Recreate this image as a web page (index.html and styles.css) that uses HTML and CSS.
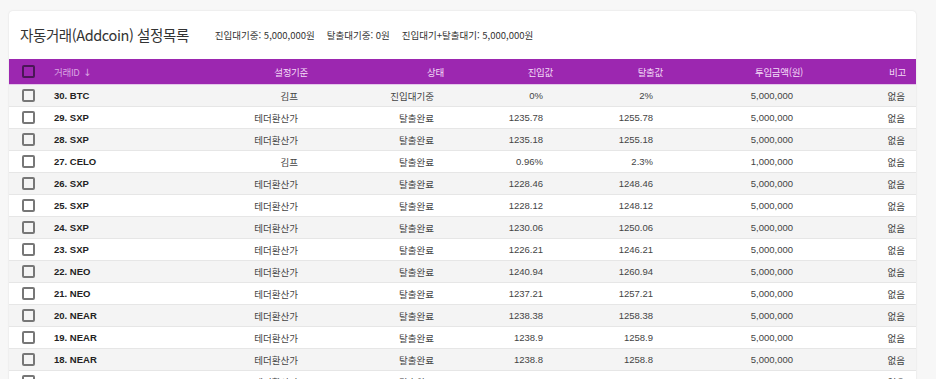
FILE: index.html
```html
<!DOCTYPE html>
<html lang="ko">
<head>
    <meta charset="utf-8">
    <title>자동거래 설정목록</title>
    <link rel="stylesheet" href="styles.css">
</head>
<body>
    <div class="card">
        <div class="toolbar">
            <h2 class="toolbar-title">자동거래(Addcoin) 설정목록</h2>
            <div class="toolbar-stats">
                <span>진입대기중: 5,000,000원</span>
                <span>탈출대기중: 0원</span>
                <span>진입대기+탈출대기: 5,000,000원</span>
            </div>
        </div>
        <table class="grid">
            <colgroup>
                <col class="c-check">
                <col class="c-id">
                <col class="c-base">
                <col class="c-state">
                <col class="c-in">
                <col class="c-out">
                <col class="c-amount">
                <col class="c-note">
            </colgroup>
            <thead>
                <tr>
                    <th class="cell-check"><span class="box box-head"></span></th>
                    <th class="cell-id sorted">거래ID <span class="arrow">&#8595;</span></th>
                    <th>설정기준</th>
                    <th>상태</th>
                    <th>진입값</th>
                    <th>탈출값</th>
                    <th>투입금액(원)</th>
                    <th class="last">비고</th>
                </tr>
            </thead>
            <tbody>
                <tr><td class="cell-check"><span class="box"></span></td><td class="cell-id">30. BTC</td><td>김프</td><td>진입대기중</td><td>0%</td><td>2%</td><td>5,000,000</td><td class="last">없음</td></tr>
                <tr><td class="cell-check"><span class="box"></span></td><td class="cell-id">29. SXP</td><td>테더환산가</td><td>탈출완료</td><td>1235.78</td><td>1255.78</td><td>5,000,000</td><td class="last">없음</td></tr>
                <tr><td class="cell-check"><span class="box"></span></td><td class="cell-id">28. SXP</td><td>테더환산가</td><td>탈출완료</td><td>1235.18</td><td>1255.18</td><td>5,000,000</td><td class="last">없음</td></tr>
                <tr><td class="cell-check"><span class="box"></span></td><td class="cell-id">27. CELO</td><td>김프</td><td>탈출완료</td><td>0.96%</td><td>2.3%</td><td>1,000,000</td><td class="last">없음</td></tr>
                <tr><td class="cell-check"><span class="box"></span></td><td class="cell-id">26. SXP</td><td>테더환산가</td><td>탈출완료</td><td>1228.46</td><td>1248.46</td><td>5,000,000</td><td class="last">없음</td></tr>
                <tr><td class="cell-check"><span class="box"></span></td><td class="cell-id">25. SXP</td><td>테더환산가</td><td>탈출완료</td><td>1228.12</td><td>1248.12</td><td>5,000,000</td><td class="last">없음</td></tr>
                <tr><td class="cell-check"><span class="box"></span></td><td class="cell-id">24. SXP</td><td>테더환산가</td><td>탈출완료</td><td>1230.06</td><td>1250.06</td><td>5,000,000</td><td class="last">없음</td></tr>
                <tr><td class="cell-check"><span class="box"></span></td><td class="cell-id">23. SXP</td><td>테더환산가</td><td>탈출완료</td><td>1226.21</td><td>1246.21</td><td>5,000,000</td><td class="last">없음</td></tr>
                <tr><td class="cell-check"><span class="box"></span></td><td class="cell-id">22. NEO</td><td>테더환산가</td><td>탈출완료</td><td>1240.94</td><td>1260.94</td><td>5,000,000</td><td class="last">없음</td></tr>
                <tr><td class="cell-check"><span class="box"></span></td><td class="cell-id">21. NEO</td><td>테더환산가</td><td>탈출완료</td><td>1237.21</td><td>1257.21</td><td>5,000,000</td><td class="last">없음</td></tr>
                <tr><td class="cell-check"><span class="box"></span></td><td class="cell-id">20. NEAR</td><td>테더환산가</td><td>탈출완료</td><td>1238.38</td><td>1258.38</td><td>5,000,000</td><td class="last">없음</td></tr>
                <tr><td class="cell-check"><span class="box"></span></td><td class="cell-id">19. NEAR</td><td>테더환산가</td><td>탈출완료</td><td>1238.9</td><td>1258.9</td><td>5,000,000</td><td class="last">없음</td></tr>
                <tr><td class="cell-check"><span class="box"></span></td><td class="cell-id">18. NEAR</td><td>테더환산가</td><td>탈출완료</td><td>1238.8</td><td>1258.8</td><td>5,000,000</td><td class="last">없음</td></tr>
                <tr><td class="cell-check"><span class="box"></span></td><td class="cell-id">17. NEAR</td><td>테더환산가</td><td>탈출완료</td><td>1239.12</td><td>1259.12</td><td>5,000,000</td><td class="last">없음</td></tr>
            </tbody>
        </table>
    </div>
</body>
</html>
```

FILE: styles.css
```css
body {
    margin: 0;
    padding: 11px 20px 0 9px;
    background-color: #f7f7f7;
    font-family: "Liberation Sans", Arial, "Noto Sans CJK KR", sans-serif;
    color: #444;
    height: 379px;
    overflow: hidden;
}

/* 카드 */
.card {
    background-color: #fff;
    border-radius: 4px 4px 0 0;
    box-shadow: 0 0 2px rgba(0, 0, 0, 0.12);
}

.toolbar {
    height: 48px;
    display: flex;
    align-items: center;
    padding-left: 11px;
    padding-bottom: 1px;
    box-sizing: border-box;
}

.toolbar-title {
    margin: 0;
    font-family: "Noto Sans CJK KR", sans-serif;
    font-weight: 400;
    font-size: 14.5px;
    letter-spacing: -0.4px;
    color: #333;
}

.toolbar-stats {
    margin-left: 26px;
    display: flex;
    gap: 12px;
    font-family: "Noto Sans CJK KR", sans-serif;
    font-size: 9.5px;
    color: #333;
}

/* 테이블 */
.grid {
    width: 100%;
    border-collapse: collapse;
    table-layout: fixed;
    font-size: 9.5px;
}

.c-check { width: 35px; }
.c-id { width: 156px; }
.c-base { width: 114px; }
.c-state { width: 136px; }
.c-in { width: 109px; }
.c-out { width: 110px; }
.c-amount { width: 140px; }
.c-note { width: 107px; }

.grid th {
    height: 25px;
    padding: 0 6px 0 0;
    background-color: #9c27b0;
    color: #f3dcf7;
    font-weight: 400;
    text-align: right;
    border-bottom: 1px solid #e4c6ea;
    font-family: "Noto Sans CJK KR", sans-serif;
    letter-spacing: -0.3px;
}

.grid th.sorted {
    color: #d9a5e2;
}

.arrow {
    font-family: "DejaVu Sans", sans-serif;
    font-size: 10px;
    margin-left: 1px;
}

.grid td {
    height: 21px;
    padding: 0 16px 0 0;
    text-align: right;
    border-bottom: 1px solid #e6e6e6;
    white-space: nowrap;
}

.grid tbody tr:nth-child(odd) {
    background-color: #f4f4f4;
}

.grid th.last {
    padding-right: 10px;
}

.grid td.last {
    padding-right: 11px;
}

.grid .cell-check {
    text-align: left;
    padding: 0 0 0 13px;
}

.grid .cell-id {
    text-align: left;
    padding: 0 0 0 10px;
}

.grid td.cell-id {
    font-weight: bold;
    color: #222;
}

/* 체크박스 */
.box {
    display: block;
    width: 9px;
    height: 9px;
    border: 2px solid #777;
    border-radius: 2px;
}

.box-head {
    border-color: #4a1656;
}
```
